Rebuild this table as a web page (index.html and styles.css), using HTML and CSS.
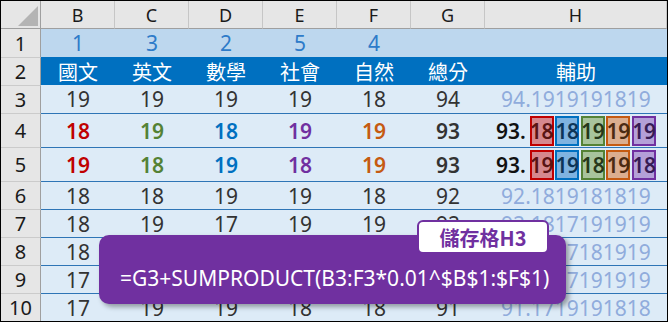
FILE: index.html
```html
<!DOCTYPE html>
<html lang="zh-Hant">
<head>
<meta charset="utf-8">
<title>輔助欄位</title>
<link rel="stylesheet" href="styles.css">
</head>
<body>
<div class="sheet">
  <div class="grid">
    <div class="corner"><span class="tri"></span></div>
    <div class="ch">B</div><div class="ch">C</div><div class="ch">D</div><div class="ch">E</div><div class="ch">F</div><div class="ch">G</div><div class="ch">H</div>

    <div class="rh first">1</div>
    <div class="c w">1</div><div class="c w">3</div><div class="c w">2</div><div class="c w">5</div><div class="c w">4</div><div class="c w"></div><div class="c w"></div>

    <div class="rh">2</div>
    <div class="c t">國文</div><div class="c t">英文</div><div class="c t">數學</div><div class="c t">社會</div><div class="c t">自然</div><div class="c t">總分</div><div class="c t">輔助</div>

    <div class="rh">3</div>
    <div class="c d">19</div><div class="c d">19</div><div class="c d">19</div><div class="c d">19</div><div class="c d">18</div><div class="c d">94</div><div class="c d h">94.1919191819</div>

    <div class="rh">4</div>
    <div class="c d bt b red">18</div><div class="c d bt b green">19</div><div class="c d bt b blue">18</div><div class="c d bt b purple">19</div><div class="c d bt b orange">19</div><div class="c d bt b">93</div>
    <div class="c d bt b hx"><span class="int">93.</span><span class="bx bred">18</span><span class="bx bblue">18</span><span class="bx bgreen">19</span><span class="bx borange">19</span><span class="bx bpurple">19</span></div>

    <div class="rh">5</div>
    <div class="c d bt b red">19</div><div class="c d bt b green">18</div><div class="c d bt b blue">19</div><div class="c d bt b purple">18</div><div class="c d bt b orange">19</div><div class="c d bt b">93</div>
    <div class="c d bt b hx"><span class="int">93.</span><span class="bx bred">19</span><span class="bx bblue">19</span><span class="bx bgreen">18</span><span class="bx borange">19</span><span class="bx bpurple">18</span></div>

    <div class="rh">6</div>
    <div class="c d bt">18</div><div class="c d bt">18</div><div class="c d bt">19</div><div class="c d bt">19</div><div class="c d bt">18</div><div class="c d bt">92</div><div class="c d bt h">92.1819181819</div>

    <div class="rh">7</div>
    <div class="c d bt">18</div><div class="c d bt">19</div><div class="c d bt">17</div><div class="c d bt">19</div><div class="c d bt">19</div><div class="c d bt">92</div><div class="c d bt h">92.1817191919</div>

    <div class="rh">8</div>
    <div class="c d bt">18</div><div class="c d bt">18</div><div class="c d bt">17</div><div class="c d bt">19</div><div class="c d bt">19</div><div class="c d bt">91</div><div class="c d bt h">91.1817181919</div>

    <div class="rh">9</div>
    <div class="c d bt">17</div><div class="c d bt">19</div><div class="c d bt">17</div><div class="c d bt">19</div><div class="c d bt">19</div><div class="c d bt">91</div><div class="c d bt h">91.1717191919</div>

    <div class="rh">10</div>
    <div class="c d bt">17</div><div class="c d bt">19</div><div class="c d bt">19</div><div class="c d bt">18</div><div class="c d bt">18</div><div class="c d bt">91</div><div class="c d bt h">91.1719191818</div>
  </div>

  <div class="tip">
    <div class="label">儲存格H3</div>
    <div class="formula">=G3+SUMPRODUCT(B3:F3*0.01^$B$1:$F$1)</div>
  </div>
</div>
</body>
</html>
```

FILE: styles.css
```css
* { box-sizing: border-box; }
html, body { margin: 0; padding: 0; background: #fff; }

.sheet {
  position: relative;
  width: 668px;
  height: 322px;
  border: 1px solid #000;
  font-family: "Noto Sans", "Open Sans", "Noto Sans CJK TC", sans-serif;
  overflow: hidden;
}

.grid {
  display: grid;
  grid-template-columns: 40px repeat(6, 74px) 182px;
  grid-template-rows: 28px 28px 28px 28px 34px 34px repeat(5, 28px);
}

.corner {
  background: #e6e6e6;
  border-right: 1px solid #9f9f9f;
  border-bottom: 1px solid #9f9f9f;
  display: flex;
  justify-content: flex-end;
  align-items: flex-end;
  padding: 0 2px 2px 0;
}
.tri {
  width: 0;
  height: 0;
  border-left: 20px solid transparent;
  border-bottom: 20px solid #b4b4b4;
}

.ch {
  background: #e6e6e6;
  border-right: 1px solid #c6c6c6;
  border-bottom: 1px solid #9f9f9f;
  display: flex;
  align-items: center;
  justify-content: center;
  font-size: 18px;
  color: #1a1a1a;
}

.rh {
  background: #e6e6e6;
  border-right: 1px solid #9f9f9f;
  border-top: 1px solid #cbcbcb;
  display: flex;
  align-items: center;
  justify-content: center;
  font-size: 20px;
  color: #1a1a1a;
}
.rh.first { border-top: 0; }

.c {
  display: flex;
  align-items: center;
  justify-content: center;
  font-size: 21px;
  color: #333;
  white-space: nowrap;
}
.w { background: #bdd7ee; color: #2e7bc9; }
.t {
  background: #0070c0;
  color: #fff;
  font-family: "Noto Sans CJK TC", sans-serif;
  font-size: 20px;
}
.d { background: #ddebf7; }
.bt { border-top: 1px solid #2e75b6; }
.b { font-weight: 600; }
.h { color: #90acdc; }

.red { color: #c00000; }
.green { color: #548235; }
.blue { color: #0070c0; }
.purple { color: #7030a0; }
.orange { color: #c55a11; }

.hx { color: #111; }
.int { margin-right: 2px; }
.bx {
  display: inline-flex;
  justify-content: center;
  align-items: center;
  width: 24px;
  height: 30px;
  border: 2px solid;
  margin-left: 1.6px;
  letter-spacing: -0.3px;
}
.bred { border-color: #c00000; background: #d6888e; color: #5a1414; }
.bblue { border-color: #0070c0; background: #7fb3e0; color: #0c3558; }
.bgreen { border-color: #548235; background: #a8c49c; color: #26381a; }
.borange { border-color: #c55a11; background: #dbae8f; color: #4c2a12; }
.bpurple { border-color: #7030a0; background: #b4a0d8; color: #371c55; }

.tip {
  position: absolute;
  left: 98px;
  top: 234px;
  width: 467px;
  height: 69px;
  background: #7030a0;
  border-radius: 10px;
  box-shadow: 3px 3px 5px rgba(0, 0, 0, 0.35);
  display: flex;
  align-items: flex-end;
  padding: 0 0 12px 21px;
}
.formula {
  color: #fff;
  font-size: 21px;
  line-height: 28px;
  white-space: nowrap;
}
.label {
  position: absolute;
  left: 318px;
  top: -15px;
  width: 132px;
  height: 34px;
  background: #fff;
  border: 2px solid #7030a0;
  border-radius: 6px;
  display: flex;
  align-items: center;
  justify-content: center;
  color: #7030a0;
  font-family: "Noto Sans CJK TC", sans-serif;
  font-weight: 700;
  font-size: 20px;
}
```
